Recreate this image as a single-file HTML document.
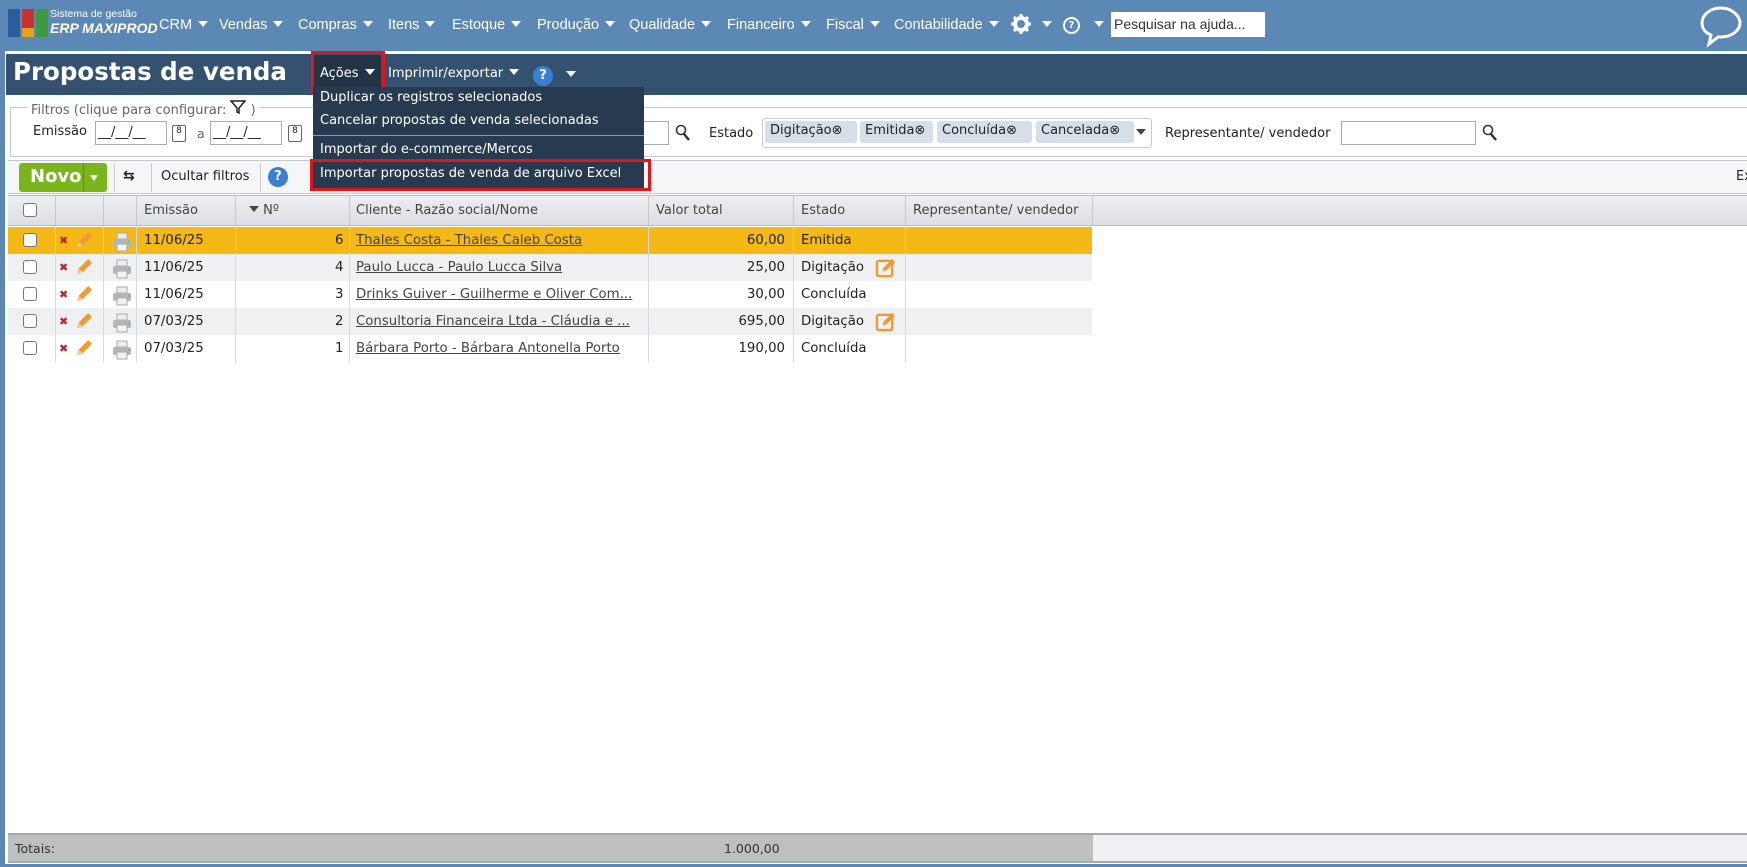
<!DOCTYPE html>
<html><head><meta charset="utf-8"><style>
*{box-sizing:border-box;margin:0;padding:0}
body{width:1747px;height:867px;overflow:hidden;background:#5b87b3;font-family:"DejaVu Sans",Verdana,sans-serif;font-size:12.5px;color:#222;position:relative}
.a{position:absolute}
.nav{left:0;top:0;width:1747px;height:50px;background:#5b88b4}
.nav span.m{position:absolute;top:17px;color:#fff;font-family:"Liberation Sans",sans-serif;font-size:14.5px}
.tri{display:inline-block;width:0;height:0;border-left:5px solid transparent;border-right:5px solid transparent;border-top:6px solid #fff;margin-left:6px;vertical-align:2px}
.main{left:5px;top:51px;width:1742px;height:813px;background:#fff}
.title{left:6px;top:54px;width:1741px;height:41px;background:#34516f}
.dd{left:313px;top:87px;width:331px;height:103px;background:#273a50;color:#fff;font-size:13px}
.dd div{position:absolute;left:7px}
.hd{left:8px;top:195px;width:1739px;height:31px;background:linear-gradient(#eceef1,#dcdfe3);border-top:1px solid #b8bcc2;border-bottom:1px solid #b8bcc2;font-size:13px}
.col{position:absolute;top:0;height:30px;border-left:1px solid #c4c8cd}
.row{position:absolute;left:8px;width:1084px;height:27px}
.cell{position:absolute;top:6px}
.v{position:absolute;top:6px;right:307px}
.lnk{text-decoration:underline;color:#444}
.cb{position:absolute;left:15px;top:6px;width:14px;height:14px;border:1px solid #777;border-radius:3px;background:#fff}
.vl{position:absolute;top:226px;height:137px;border-left:1px solid #d6d9dd}
.rows{font-size:13.3px}
.pr{position:absolute;left:104px;top:5px}
.pen{position:absolute;left:66px;top:4px}
.x{position:absolute;left:51px;top:7px;color:#c8202a;font-weight:bold;font-size:11px}
</style></head><body>
<div class="a nav">
 <div class="a" style="left:8px;top:9px;width:12px;height:28px;background:#2b5d9e"></div>
 <div class="a" style="left:22px;top:9px;width:12px;height:19px;background:#c9322e"></div>
 <div class="a" style="left:22px;top:28px;width:12px;height:9px;background:#e8a21a"></div>
 <div class="a" style="left:36px;top:9px;width:12px;height:28px;background:#3d9a3f"></div>
 <div class="a" style="left:50px;top:9px;color:#fff;font-family:'Liberation Sans',sans-serif;font-size:10.5px;line-height:11px">Sistema de gestão<br><i style="font-size:14px;font-weight:bold;line-height:17px">ERP MAXIPROD</i></div>
 <span class="m" style="left:159px">CRM<i class="tri"></i></span>
 <span class="m" style="left:219px">Vendas<i class="tri"></i></span>
 <span class="m" style="left:298px">Compras<i class="tri"></i></span>
 <span class="m" style="left:388px">Itens<i class="tri"></i></span>
 <span class="m" style="left:452px">Estoque<i class="tri"></i></span>
 <span class="m" style="left:537px">Produção<i class="tri"></i></span>
 <span class="m" style="left:629px">Qualidade<i class="tri"></i></span>
 <span class="m" style="left:727px">Financeiro<i class="tri"></i></span>
 <span class="m" style="left:826px">Fiscal<i class="tri"></i></span>
 <span class="m" style="left:894px">Contabilidade<i class="tri"></i></span>
 <svg class="a" style="left:1010px;top:13px" width="22" height="22" viewBox="0 0 22 22"><circle cx="11" cy="11" r="6" fill="none" stroke="#fff" stroke-width="4"/><g stroke="#fff" stroke-width="3"><path d="M11 1v4M11 17v4M1 11h4M17 11h4M4 4l3 3M15 15l3 3M4 18l3-3M15 7l3-3"/></g></svg>
 <i class="tri a" style="left:1036px;top:21px"></i>
 <div class="a" style="left:1063px;top:17px;width:17px;height:17px;border:2px solid #fff;border-radius:50%;color:#fff;font-size:10px;text-align:center;line-height:13px;font-weight:bold">?</div><i class="tri a" style="left:1088px;top:21px"></i>
 <div class="a" style="left:1111px;top:12px;width:154px;height:25px;background:#fff;color:#333;font-family:'Liberation Sans',sans-serif;font-size:14px;padding:4px 3px">Pesquisar na ajuda...</div>
 <svg class="a" style="left:1698px;top:4px" width="46" height="44" viewBox="0 0 46 44"><path d="M23 4C12 4 4 11 4 19c0 6 4 10 9 12l-2 9 9-7c1 0 2 0 3 0 11 0 19-7 19-14S34 4 23 4z" fill="none" stroke="#fff" stroke-width="3"/></svg>
</div>
<div class="a main"></div>
<div class="a title"></div>
<div class="a" style="left:13px;top:57px;color:#fff;font-weight:bold;font-size:24.5px">Propostas de venda</div>
<div class="a" style="left:314px;top:55px;width:67px;height:36px;background:#243447"></div>
<div class="a" style="left:320px;top:66px;color:#fff;font-size:13px">Ações<i class="tri"></i></div>
<div class="a" style="left:388px;top:66px;color:#fff;font-size:13px">Imprimir/exportar<i class="tri"></i></div>
<div class="a" style="left:533px;top:66px;width:20px;height:20px;border-radius:50%;background:#3a7fd0;color:#fff;font-weight:bold;font-size:13px;text-align:center;line-height:20px">?</div>
<i class="tri a" style="left:560px;top:71px"></i>
<div class="a" style="left:311px;top:51px;width:74px;height:43px;border:3px solid #e0161c"></div>

<!-- filters -->
<div class="a" style="left:10px;top:107px;width:1737px;height:50px;border:1px solid #c5c8cc;border-right:none"></div>
<div class="a" style="left:28px;top:100px;background:#fff;padding:0 3px;color:#666;font-size:13px">Filtros (clique para configurar: <svg width="16" height="14" viewBox="0 0 16 14"><path d="M1 1h14L9 8v5L7 12V8z" fill="none" stroke="#222" stroke-width="1.5"/></svg> )</div>
<div class="a" style="left:33px;top:124px;font-size:13px">Emissão</div>
<div class="a" style="left:95px;top:121px;width:72px;height:24px;border:1px solid #aaa;padding:3px 2px;font-size:13px">__/__/__</div>
<div class="a" style="left:172px;top:125px;width:14px;height:17px;border:1.5px solid #666;border-radius:2px;font-size:9px;text-align:center">8</div>
<div class="a" style="left:197px;top:126px;color:#666">a</div>
<div class="a" style="left:210px;top:121px;width:72px;height:24px;border:1px solid #aaa;padding:3px 2px;font-size:13px">__/__/__</div>
<div class="a" style="left:288px;top:125px;width:14px;height:17px;border:1.5px solid #666;border-radius:2px;font-size:9px;text-align:center">8</div>
<div class="a" style="left:600px;top:121px;width:69px;height:24px;border:1px solid #aaa"></div>
<svg class="a" style="left:675px;top:124px" width="16" height="18" viewBox="0 0 16 18"><circle cx="6" cy="6" r="4.5" fill="none" stroke="#333" stroke-width="1.6"/><path d="M9 10l5 6" stroke="#333" stroke-width="2.5"/></svg>
<div class="a" style="left:709px;top:126px;font-size:13px">Estado</div>
<div class="a" style="left:762px;top:118px;width:390px;height:30px;border:1px solid #ccc;border-radius:3px"></div>
<div class="a" style="left:765px;top:121px;width:92px;height:22px;background:#d6dfe8;border-radius:3px;padding:2px 5px;font-size:13px">Digitação⊗</div>
<div class="a" style="left:860px;top:121px;width:73px;height:22px;background:#d6dfe8;border-radius:3px;padding:2px 5px;font-size:13px">Emitida⊗</div>
<div class="a" style="left:937px;top:121px;width:95px;height:22px;background:#d6dfe8;border-radius:3px;padding:2px 5px;font-size:13px">Concluída⊗</div>
<div class="a" style="left:1036px;top:121px;width:98px;height:22px;background:#d6dfe8;border-radius:3px;padding:2px 5px;font-size:13px">Cancelada⊗</div>
<div class="a" style="left:1136px;top:129px;border-left:5px solid transparent;border-right:5px solid transparent;border-top:6px solid #444"></div>
<div class="a" style="left:1165px;top:126px;font-size:13px">Representante/ vendedor</div>
<div class="a" style="left:1341px;top:121px;width:135px;height:24px;border:1px solid #aaa"></div>
<svg class="a" style="left:1482px;top:124px" width="16" height="18" viewBox="0 0 16 18"><circle cx="6" cy="6" r="4.5" fill="none" stroke="#333" stroke-width="1.6"/><path d="M9 10l5 6" stroke="#333" stroke-width="2.5"/></svg>

<!-- toolbar -->
<div class="a" style="left:8px;top:160px;width:1739px;height:34px;background:#f5f6f7;border-top:1px solid #c5c8cc;border-bottom:1px solid #c5c8cc"></div>
<div class="a" style="left:19px;top:163px;width:88px;height:29px;background:#7ab51d;border-radius:3px"></div>
<div class="a" style="left:30px;top:166px;color:#fff;font-weight:bold;font-size:18px">Novo</div>
<div class="a" style="left:83px;top:163px;width:1px;height:29px;background:#5e8f14"></div>
<div class="a" style="left:90px;top:175px;border-left:4px solid transparent;border-right:4px solid transparent;border-top:6px solid #fff"></div>
<div class="a" style="left:114px;top:163px;width:1px;height:29px;background:#ccc"></div>
<div class="a" style="left:123px;top:168px;font-size:14px;font-weight:bold">⇆</div>
<div class="a" style="left:151px;top:163px;width:1px;height:29px;background:#ccc"></div>
<div class="a" style="left:161px;top:169px;font-size:13px">Ocultar filtros</div>
<div class="a" style="left:260px;top:163px;width:1px;height:29px;background:#ccc"></div>
<div class="a" style="left:268px;top:167px;width:20px;height:20px;border-radius:50%;background:#3a7fd0;color:#fff;font-weight:bold;font-size:13px;text-align:center;line-height:20px">?</div>
<div class="a" style="left:1736px;top:169px;font-size:13px">Ex</div>

<!-- table header -->
<div class="a hd">
 <div class="cb" style="left:15px;top:7px"></div>
 <div class="col" style="left:47px"></div><div class="col" style="left:95px"></div><div class="col" style="left:128px"></div>
 <div class="col" style="left:227px"></div><div class="col" style="left:341px"></div><div class="col" style="left:640px"></div>
 <div class="col" style="left:785px"></div><div class="col" style="left:897px"></div><div class="col" style="left:1084px"></div>
 <div class="cell" style="left:136px;top:7px;color:#444">Emissão</div>
 <div class="cell" style="left:241px;top:7px;color:#444"><span style="display:inline-block;border-left:5px solid transparent;border-right:5px solid transparent;border-top:6px solid #444;vertical-align:2px"></span> Nº</div>
 <div class="cell" style="left:348px;top:7px;color:#444">Cliente - Razão social/Nome</div>
 <div class="cell" style="left:648px;top:7px;color:#444">Valor total</div>
 <div class="cell" style="left:793px;top:7px;color:#444">Estado</div>
 <div class="cell" style="left:905px;top:7px;color:#444">Representante/ vendedor</div>
</div>

<div class="row" style="top:227px;background:#f4b916"></div>
<div class="row" style="top:254px;background:#eff0f2"></div>
<div class="row" style="top:281px;background:#fff"></div>
<div class="row" style="top:308px;background:#eff0f2"></div>
<div class="row" style="top:335px;background:#fff"></div>
<div class="vl" style="left:55px"></div><div class="vl" style="left:103px"></div><div class="vl" style="left:136px"></div>
<div class="vl" style="left:235px"></div><div class="vl" style="left:349px"></div><div class="vl" style="left:648px"></div>
<div class="vl" style="left:793px"></div><div class="vl" style="left:905px"></div>

<svg width="0" height="0" style="position:absolute"><defs>
<symbol id="prn" viewBox="0 0 20 20"><rect x="5" y="1" width="10" height="6" fill="#eee" stroke="#aaa"/><rect x="1" y="7" width="18" height="8" rx="2" fill="#b5b5b5"/><rect x="5" y="12" width="10" height="7" fill="#f2f2f2" stroke="#aaa"/><rect x="16" y="9" width="2" height="2" fill="#6c6"/></symbol>
<symbol id="pen" viewBox="0 0 20 20"><path d="M3 17l2-6L15 1l4 4L9 15z" fill="#f39a2e"/><path d="M3 17l2-6 4 4z" fill="#f6c68a"/></symbol>
<symbol id="ed" viewBox="0 0 22 22"><rect x="2" y="4" width="16" height="16" rx="2" fill="none" stroke="#f39a2e" stroke-width="2.5"/><path d="M8 15l1-4 9-9 3 3-9 9z" fill="#f39a2e"/></symbol>
</defs></svg>

<div class="a rows" style="left:8px;top:227px;width:1084px">
 <div style="position:relative;height:27px"><div class="cb"></div><span class="x">✖</span><svg class="pen" width="19" height="19"><use href="#pen"/></svg><svg class="pr" width="20" height="20"><use href="#prn"/></svg><span class="cell" style="left:136px">11/06/25</span><span class="cell" style="left:327px">6</span><span class="cell lnk" style="left:348px">Thales Costa - Thales Caleb Costa</span><span class="v">60,00</span><span class="cell" style="left:793px">Emitida</span></div>
 <div style="position:relative;height:27px"><div class="cb"></div><span class="x">✖</span><svg class="pen" width="19" height="19"><use href="#pen"/></svg><svg class="pr" width="20" height="20"><use href="#prn"/></svg><span class="cell" style="left:136px">11/06/25</span><span class="cell" style="left:327px">4</span><span class="cell lnk" style="left:348px">Paulo Lucca - Paulo Lucca Silva</span><span class="v">25,00</span><span class="cell" style="left:793px">Digitação</span><svg class="a" style="left:867px;top:3px" width="21" height="21"><use href="#ed"/></svg></div>
 <div style="position:relative;height:27px"><div class="cb"></div><span class="x">✖</span><svg class="pen" width="19" height="19"><use href="#pen"/></svg><svg class="pr" width="20" height="20"><use href="#prn"/></svg><span class="cell" style="left:136px">11/06/25</span><span class="cell" style="left:327px">3</span><span class="cell lnk" style="left:348px">Drinks Guiver - Guilherme e Oliver Com...</span><span class="v">30,00</span><span class="cell" style="left:793px">Concluída</span></div>
 <div style="position:relative;height:27px"><div class="cb"></div><span class="x">✖</span><svg class="pen" width="19" height="19"><use href="#pen"/></svg><svg class="pr" width="20" height="20"><use href="#prn"/></svg><span class="cell" style="left:136px">07/03/25</span><span class="cell" style="left:327px">2</span><span class="cell lnk" style="left:348px">Consultoria Financeira Ltda - Cláudia e ...</span><span class="v">695,00</span><span class="cell" style="left:793px">Digitação</span><svg class="a" style="left:867px;top:3px" width="21" height="21"><use href="#ed"/></svg></div>
 <div style="position:relative;height:27px"><div class="cb"></div><span class="x">✖</span><svg class="pen" width="19" height="19"><use href="#pen"/></svg><svg class="pr" width="20" height="20"><use href="#prn"/></svg><span class="cell" style="left:136px">07/03/25</span><span class="cell" style="left:327px">1</span><span class="cell lnk" style="left:348px">Bárbara Porto - Bárbara Antonella Porto</span><span class="v">190,00</span><span class="cell" style="left:793px">Concluída</span></div>
</div>

<!-- totals -->
<div class="a" style="left:8px;top:833px;width:1739px;height:30px;background:#eff0f2;border-top:2px solid #a5aab0;border-bottom:2px solid #a5aab0"></div>
<div class="a" style="left:8px;top:835px;width:1085px;height:26px;background:#bfbfbf"></div>
<div class="a" style="left:15px;top:841px;color:#333">Totais:</div>
<div class="a" style="left:724px;top:841px;color:#333">1.000,00</div>

<!-- dropdown -->
<div class="a dd">
 <div style="top:3px">Duplicar os registros selecionados</div>
 <div style="top:26px">Cancelar propostas de venda selecionadas</div>
 <div style="left:0;top:48px;width:331px;height:1px;background:#8a99aa"></div>
 <div style="top:55px">Importar do e-commerce/Mercos</div>
 <div style="top:79px">Importar propostas de venda de arquivo Excel</div>
</div>
<div class="a" style="left:310px;top:159px;width:341px;height:32px;border:3px solid #e0161c"></div>
</body></html>
